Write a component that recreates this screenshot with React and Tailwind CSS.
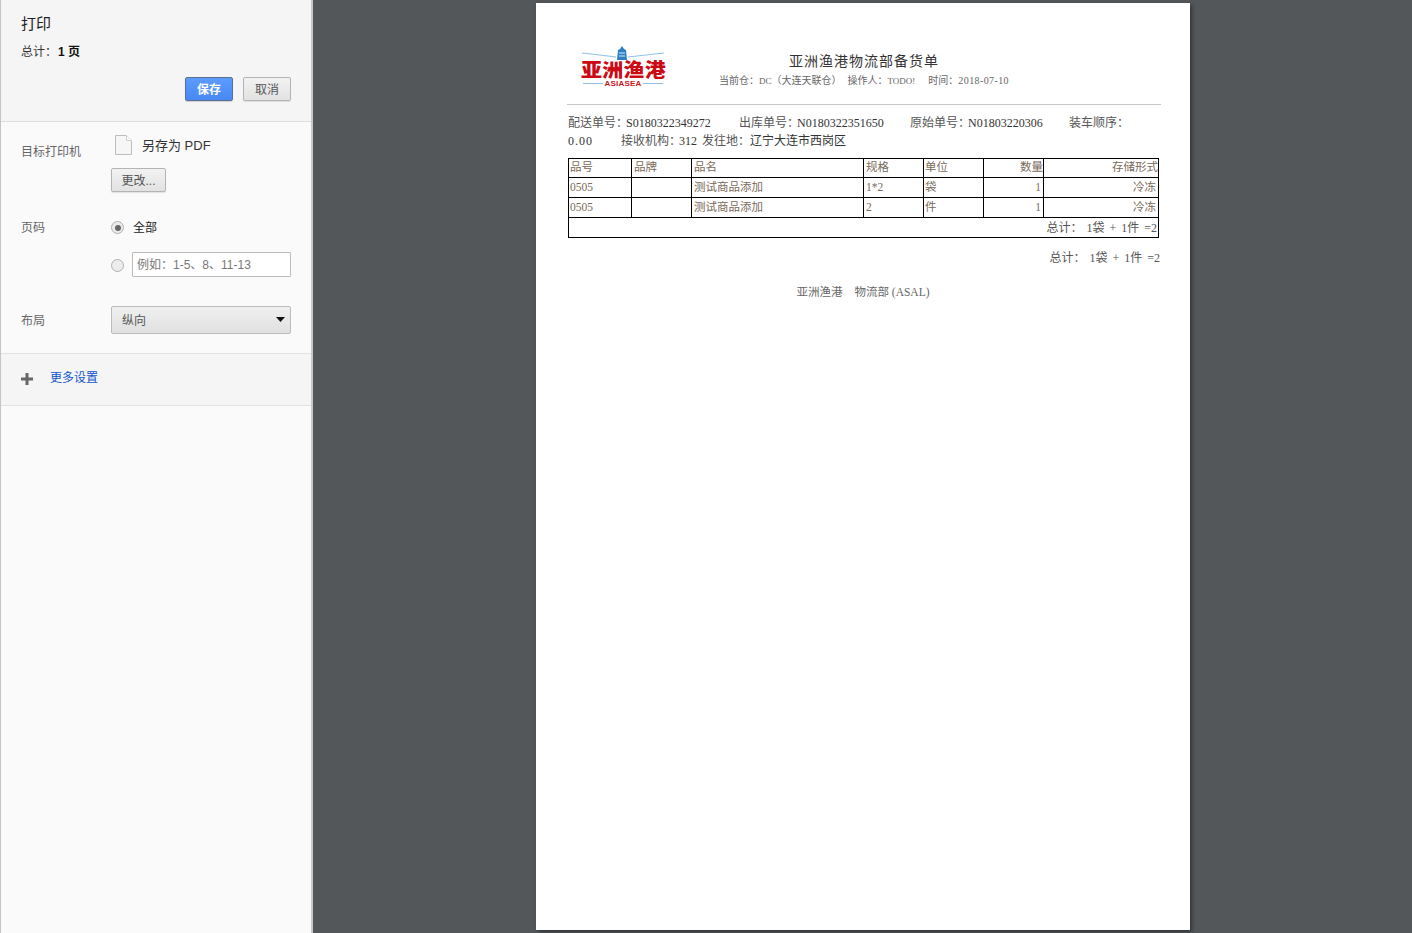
import React from 'react';

const uiFont = 'font-["Liberation_Sans","Noto_Sans_CJK_SC",sans-serif]';
const docFont = 'font-["Liberation_Serif","Noto_Sans_CJK_SC",serif]';

const rows = [
  { no: '0505', name: '测试商品添加', spec: '1*2', unit: '袋', qty: '1', store: '冷冻' },
  { no: '0505', name: '测试商品添加', spec: '2', unit: '件', qty: '1', store: '冷冻' },
];

const cell = 'border border-black h-[20px] p-0 pl-[1px] align-middle font-normal text-[11.5px] leading-none';
const cellPad = 'border border-black h-[20px] p-0 pl-[2px] align-middle font-normal text-[11.5px] leading-none';
const head = 'border border-black h-[19px] p-0 pl-[1px] align-middle font-normal text-[11.5px] leading-none';
const headPad = 'border border-black h-[19px] p-0 pl-[2px] align-middle font-normal text-[11.5px] leading-none';

function Logo() {
  return (
    <div className="w-[90px] flex flex-col items-center">
      {/* tower and wave lines */}
      <svg width="90" height="14" viewBox="0 0 90 14" className="block">
        <path d="M2 7 Q20 9 36 11 M84 7 Q66 9 48 11" stroke="#8fc0e8" strokeWidth="1" fill="none" />
        <path d="M42 0 L44 3 L46 4 L47 14 L37 14 L38 4 L40 3 Z" fill="#2d7fc1" />
        <path d="M39 7 H45 M39 10 H45" stroke="#d8ecfa" strokeWidth="1" />
      </svg>
      <div className='font-["Noto_Sans_CJK_SC",sans-serif] font-black text-[21px] leading-[19px] tracking-[0.3px] scale-y-90 text-[#cc0a14] whitespace-nowrap mr-[3px]'>亚洲渔港</div>
      <div className="flex items-center gap-[2px] mr-[4px]">
        <div className="w-[20px] h-px bg-[#8fc0e8]" />
        <div className='font-["Liberation_Sans",sans-serif] font-bold text-[8px] leading-[9px] tracking-[0.2px] text-[#c8141c]'>ASIASEA</div>
        <div className="w-[20px] h-px bg-[#8fc0e8]" />
      </div>
    </div>
  );
}

function Sidebar() {
  return (
    <div className={`w-[313px] shrink-0 h-full flex flex-col bg-[#fafafa] border-l border-[#c4c4c4] border-r-2 border-r-[#c8c8c8] ${uiFont}`}>
      <div className="h-[122px] shrink-0 bg-[#f5f5f5] border-b border-[#dcdcdc] pl-[20px] pr-[20px] pt-[15px]">
        <div className="text-[15px] leading-[18px] text-[#222]">打印</div>
        <div className="mt-[12px] text-[12px] leading-[14px] text-[#333]">总计：<b className="ml-[1px] text-[#111]">1 页</b></div>
        <div className="mt-[18px] flex justify-end gap-[10px]">
          <button className="w-[48px] h-[24px] pt-[1px] rounded-[2px] border border-[#5b6f95] bg-gradient-to-b from-[#5d9bff] to-[#4788f3] text-white text-[12px] font-bold shadow-[0_1px_1px_rgba(0,0,0,0.15)]">保存</button>
          <button className="w-[48px] h-[24px] pt-[1px] rounded-[2px] border border-[#b4b4b4] bg-gradient-to-b from-[#f2f2f2] to-[#e2e2e2] text-[#555] text-[12px] shadow-[0_1px_1px_rgba(0,0,0,0.1)]">取消</button>
        </div>
      </div>

      <div className="pl-[20px] pr-[20px] flex-none h-[232px] border-b border-[#e2e2e2]">
        <div className="flex pt-[13px]">
          <div className="w-[90px] pt-[10px] text-[12px] leading-[14px] text-[#666]">目标打印机</div>
          <div>
            <div className="flex items-center h-[20px] pl-[4px]">
              <svg width="17" height="20" viewBox="0 0 17 20">
                <path d="M.5.5 H11.5 L16.5 5.5 V19.5 H.5 Z" fill="#f6f6f6" stroke="#bdbdbd" />
                <path d="M11.5.5 V5.5 H16.5" fill="#fff" stroke="#cfcfcf" />
              </svg>
              <span className="ml-[10px] pt-[2px] text-[13px] text-[#333]">另存为 PDF</span>
            </div>
            <button className="mt-[13px] pt-[1px] block w-[55px] h-[24px] rounded-[2px] border border-[#b4b4b4] bg-gradient-to-b from-[#f2f2f2] to-[#e2e2e2] text-[#555] text-[12px] shadow-[0_1px_1px_rgba(0,0,0,0.1)]">更改...</button>
          </div>
        </div>

        <div className="flex mt-[29px]">
          <div className="w-[90px] text-[12px] leading-[14px] text-[#666]">页码</div>
          <div className="flex-1">
            <div className="flex items-center h-[14px]">
              <div className="w-[13px] h-[13px] mb-[1px] rounded-full border border-[#b0b0b0] bg-[#ececec] flex items-center justify-center">
                <div className="w-[6px] h-[6px] rounded-full bg-[#666]" />
              </div>
              <span className="ml-[9px] text-[12px] text-[#222]">全部</span>
            </div>
            <div className="flex items-center mt-[17px]">
              <div className="w-[13px] h-[13px] rounded-full border border-[#b0b0b0] bg-[#ececec] mt-[1px]" />
              <div className="ml-[8px] w-[159px] h-[25px] border border-[#bcbcbc] rounded-[1px] bg-white pl-[4px] text-[12px] leading-[25px] text-[#777]">例如：1-5、8、11-13</div>
            </div>
          </div>
        </div>

        <div className="flex items-center mt-[29px]">
          <div className="w-[90px] pt-[1px] text-[12px] leading-[14px] text-[#666]">布局</div>
          <div className="w-[180px] h-[28px] rounded-[2px] border border-[#bcbcbc] bg-gradient-to-b from-[#f0f0f0] to-[#e0e0e0] flex items-center justify-between pl-[10px] pr-[5px] text-[12px] text-[#555]">
            <span className="pt-[1px]">纵向</span>
            <svg width="9" height="5" viewBox="0 0 9 5" className="mb-[2px]"><path d="M0 0 H9 L4.5 5 Z" fill="#111" /></svg>
          </div>
        </div>
      </div>

      <div className="h-[52px] shrink-0 bg-[#f5f5f5] border-b border-[#e2e2e2] flex items-center pl-[20px] pb-[4px]">
        <svg width="12" height="12" viewBox="0 0 12 12" className="mt-[3px]"><path d="M0 4.5 H4.5 V0 H7.5 V4.5 H12 V7.5 H7.5 V12 H4.5 V7.5 H0 Z" fill="#666" /></svg>
        <span className="ml-[17px] text-[12px] text-[#1155cc]">更多设置</span>
      </div>
    </div>
  );
}

function PrintPage() {
  return (
    <div className={`w-[654px] h-[927px] bg-white shadow-[2px_2px_4px_rgba(0,0,0,0.4)] pl-[31px] pr-[29px] pt-[43px] ${docFont}`}>
      <div className="h-[59px] border-b border-[#c8c8c8] flex pl-[13px]">
        <Logo />
        <div className="ml-[44px] w-[300px] text-center">
          <div className="mt-[8px] text-[14px] leading-[16px] tracking-[1px] text-[#333]">亚洲渔港物流部备货单</div>
          <div className="mt-[4px] text-[10px] leading-[14px] text-[#666] whitespace-nowrap">
            当前仓：<span className="text-[9px]">DC</span>（大连天联仓）<span className="ml-[6px]">操作人：<span className="text-[9px]">TODO!</span></span><span className="ml-[13px]">时间：<span className="tracking-[0.4px]">2018-07-10</span></span>
          </div>
        </div>
      </div>

      <div className="pl-[1px] pt-[9px] text-[12px] leading-[18px] text-[#555] whitespace-nowrap">
        <div className="flex">
          <span className="w-[171px]">配送单号：<span className="-ml-[2px] text-[#333]">S0180322349272</span></span>
          <span className="w-[171px]">出库单号：<span className="-ml-[2px] text-[#333]">N0180322351650</span></span>
          <span className="w-[159px]">原始单号：<span className="-ml-[2px] text-[#333]">N01803220306</span></span>
          <span>装车顺序：</span>
        </div>
        <div className="flex">
          <span className="w-[53px] tracking-[1px] text-[#333]">0.00</span>
          <span className="w-[81px]">接收机构：<span className="-ml-[2px] text-[#333]">312</span></span>
          <span>发往地：<span className="text-[#333]">辽宁大连市西岗区</span></span>
        </div>
      </div>

      <table className="ml-[1px] mt-[8px] w-[590px] table-fixed border-collapse border border-black text-[#7a6a5a]">
        <colgroup>
          <col className="w-[63px]" />
          <col className="w-[60px]" />
          <col className="w-[172px]" />
          <col className="w-[60px]" />
          <col className="w-[60px]" />
          <col className="w-[60px]" />
          <col className="w-[115px]" />
        </colgroup>
        <thead>
          <tr>
            <th className={`${head} text-left`}>品号</th>
            <th className={`${headPad} text-left`}>品牌</th>
            <th className={`${headPad} text-left`}>品名</th>
            <th className={`${headPad} text-left`}>规格</th>
            <th className={`${head} text-left`}>单位</th>
            <th className={`${head} text-right`}>数量</th>
            <th className={`${head} text-right`}>存储形式</th>
          </tr>
        </thead>
        <tbody>
          {rows.map((r, i) => (
            <tr key={i}>
              <td className={cell}>{r.no}</td>
              <td className={cellPad}></td>
              <td className={cellPad}>{r.name}</td>
              <td className={cellPad}>{r.spec}</td>
              <td className={cell}>{r.unit}</td>
              <td className={`${cell} text-right pr-[2px]`}>{r.qty}</td>
              <td className={`${cell} text-right pr-[2px]`}>{r.store}</td>
            </tr>
          ))}
          <tr>
            <td colSpan="7" className="border border-black h-[20px] p-0 pr-[1px] align-middle text-right text-[12px] leading-none text-[#555] [word-spacing:2px]">
              总计：<span className="ml-[4px]">1袋 + 1件 =2</span>
            </td>
          </tr>
        </tbody>
      </table>

      <div className="mt-[12px] pr-[1px] text-right text-[12px] leading-[16px] text-[#555] [word-spacing:2px]">
        总计：<span className="ml-[4px]">1袋 + 1件 =2</span>
      </div>
      <div className="mt-[19px] text-center text-[11.5px] leading-[14px] text-[#666] pr-[2px]">
        亚洲渔港<span className="ml-[12px]">物流部 (ASAL)</span>
      </div>
    </div>
  );
}

export default function App() {
  return (
    <div className="w-[1412px] h-[933px] overflow-hidden flex bg-[#53575a]">
      <Sidebar />
      <div className="flex-1 pl-[223px] pt-[3px]">
        <PrintPage />
      </div>
    </div>
  );
}
